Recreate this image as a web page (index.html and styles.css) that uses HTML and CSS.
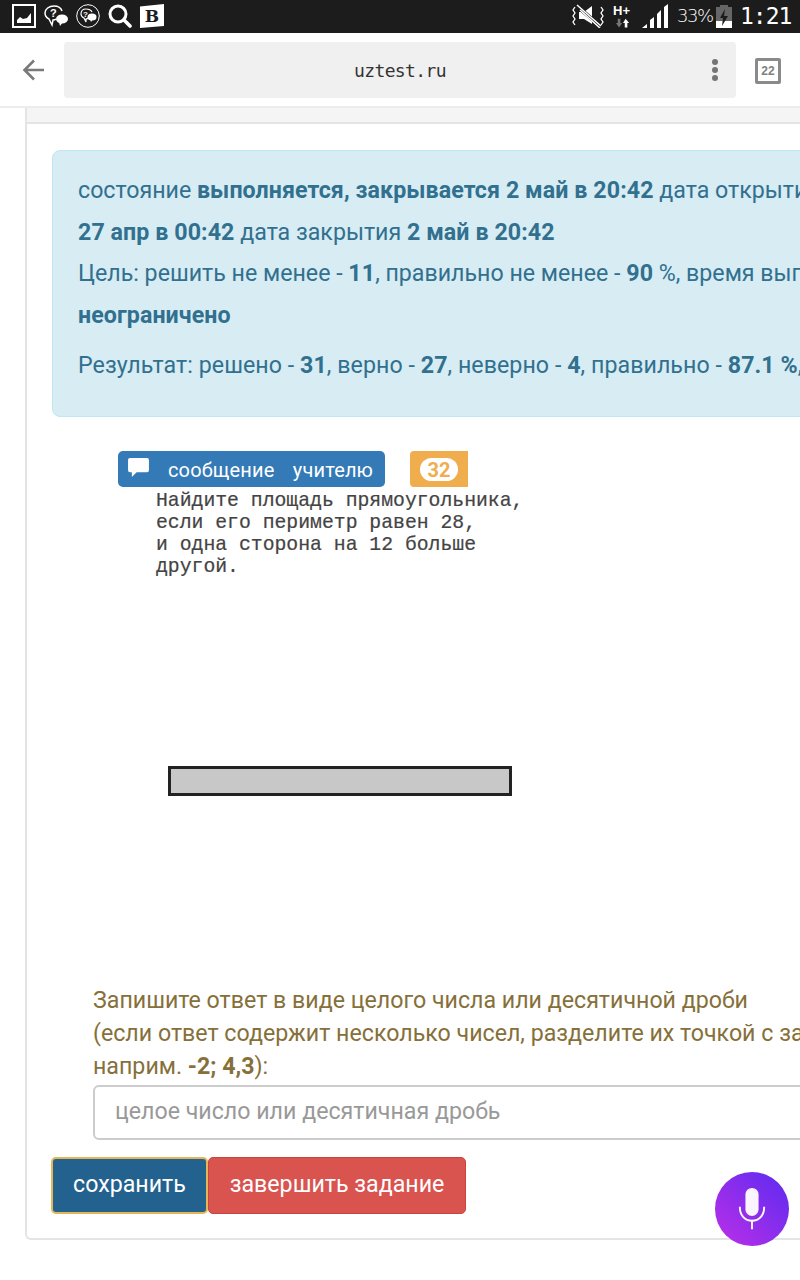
FILE: index.html
```html
<!DOCTYPE html>
<html lang="ru">
<head>
    <meta charset="UTF-8">
    <meta name="viewport" content="width=device-width, initial-scale=1.0">
    <title>uztest.ru</title>
    <link rel="stylesheet" href="styles.css">
</head>
<body>
    <div class="screen">
        <div class="status-bar">
            <div class="status-left">
                <svg class="icon" viewBox="0 0 24 24"><path fill="#fff" d="M0 0h24v24H0z"/><path fill="#1c1c1c" d="M2 2h20v20H2z"/><path fill="#fff" d="M5 19v-3l3-3 3 2 4-1 4-5v10z"/></svg>
                <svg class="icon" viewBox="0 0 24 24"><path fill="none" stroke="#fff" stroke-width="1.5" d="M10 2c-5 0-9 3-9 7 0 3 2 5 4 6l3 6 1-5c1 0 2 0 3-1"/><path fill="none" stroke="#fff" stroke-width="1.5" d="M10 2c4 0 7 2 8 5"/><text x="6" y="13" class="quest">?</text><ellipse cx="18" cy="15" rx="6" ry="4.5" fill="#fff"/><path fill="#fff" d="M15 18l1 4 3-4z"/></svg>
                <svg class="icon" viewBox="0 0 24 24"><circle cx="12" cy="12" r="11.3" fill="none" stroke="#fff"/><path fill="none" stroke="#fff" stroke-width="1.2" d="M10 5c-3 0-5 2-5 5 0 2 1 3 3 4l2 4 0-3c1 0 2-1 2-1M10 5c3 0 5 1 6 3"/><text x="7" y="13" class="quest small">?</text><ellipse cx="16" cy="13" rx="4.5" ry="3.5" fill="#fff"/><path fill="#fff" d="M14 15l1 3 2-3z"/></svg>
                <svg class="icon" viewBox="0 0 24 24"><circle cx="10" cy="10" r="8" fill="none" stroke="#fff" stroke-width="3"/><path stroke="#fff" stroke-width="3.6" stroke-linecap="round" d="M16 16l6 6"/></svg>
                <div class="b-icon">B</div>
            </div>
            <div class="status-right">
                <svg class="mute" viewBox="0 0 32 24"><path fill="#fff" d="M7 8h5l8-6v18l-8-5H7z"/><path stroke="#1c1c1c" stroke-width="4" d="M6 3l22 19"/><path stroke="#fff" stroke-width="1.5" d="M5 1l24 21M8 6l20 18"/><path fill="none" stroke="#fff" stroke-width="1.3" d="M3 3l-2 3 2 3-2 3 2 3-2 3 2 3M29 3l2 3-2 3 2 3-2 3 2 3-2 3"/></svg>
                <div class="net"><span class="net-h">H+</span><svg class="net-arrows" viewBox="0 0 16 10"><path fill="#777" d="M2 0h3v5h2L3.500 10 0 5h2z"/><path fill="#fff" d="M11 0l4 5h-2v5h-3V5H8z"/></svg></div>
                <svg class="signal" viewBox="0 0 26 24"><path fill="#fff" d="M0 24l5-4v4zM8 24v-8l4-3v11zM15 24V10l4-4v18zM22 24V3l4-3v24z"/></svg>
                <span class="battery-text">33%</span>
                <svg class="battery" viewBox="0 0 16 23"><path fill="#666" d="M4 0h8v2h4v21H0V2h4z"/><path fill="#fff" d="M0 16h16v7H0z"/><path fill="#1c1c1c" d="M9 4l-5 9h3l-1 8 6-10H8z"/></svg>
                <span class="clock">1:21</span>
            </div>
        </div>

        <div class="toolbar">
            <svg class="back" viewBox="0 0 22 22"><path fill="none" stroke="#7a7a7a" stroke-width="2.600" d="M22 11H3M12 1.500L2.500 11l9.500 9.500"/></svg>
            <div class="url-bar">
                <span class="url">uztest.ru</span>
                <div class="dots"><i></i><i></i><i></i></div>
            </div>
            <div class="tabs">22</div>
        </div>

        <div class="panel">
            <div class="panel-heading"></div>
            <div class="panel-body">
                <div class="alert">
                    <p class="alert-line">состояние <b>выполняется, закрывается 2 май в 20:42</b> дата открытия</p>
                    <p class="alert-line"><b>27 апр в 00:42</b> дата закрытия <b>2 май в 20:42</b></p>
                    <p class="alert-line">Цель: решить не менее - <b>11</b>, правильно не менее - <b>90</b> %, время выполнения</p>
                    <p class="alert-line"><b>неограничено</b></p>
                    <p class="alert-line result">Результат: решено - <b>31</b>, верно - <b>27</b>, неверно - <b>4</b>, правильно - <b>87.1 %</b>,</p>
                </div>

                <div class="task">
                    <div class="task-buttons">
                        <div class="msg-btn">
                            <svg class="msg-icon" viewBox="0 0 22 20"><path fill="#fff" d="M2 0h18a2 2 0 0 1 2 2v11a2 2 0 0 1-2 2H9l-5 5v-5H2a2 2 0 0 1-2-2V2a2 2 0 0 1 2-2z"/></svg>
                            <span class="msg-label">сообщение&nbsp;&nbsp; учителю</span>
                        </div>
                        <div class="count-btn"><span class="badge">32</span></div>
                    </div>
                    <pre class="task-text">Найдите площадь прямоугольника,
если его периметр равен 28,
и одна сторона на 12 больше
другой.</pre>
                    <div class="figure"></div>
                </div>

                <div class="answer">
                    <p class="hint">Запишите ответ в виде целого числа или десятичной дроби<br>(если ответ содержит несколько чисел, разделите их точкой с запятой,<br>наприм. <b>-2; 4,3</b>):</p>
                    <input class="answer-input" type="text" placeholder="целое число или десятичная дробь">
                </div>

                <div class="actions">
                    <button class="btn btn-save">сохранить</button>
                    <button class="btn btn-finish">завершить задание</button>
                </div>
            </div>
        </div>

        <div class="mic">
            <svg viewBox="0 0 32 44"><rect x="9" y="0" width="14" height="30" rx="7" fill="#fff" opacity=".95"/><path fill="none" stroke="#fff" stroke-width="2" d="M3 20c0 9 5 15 13 15s13-6 13-15M16 35v9"/></svg>
        </div>
    </div>
</body>
</html>
```

FILE: styles.css
```css
* {
    margin: 0;
    padding: 0;
    box-sizing: border-box;
}

body {
    background: #fff;
    font-family: Roboto, "Liberation Sans", sans-serif;
}

.screen {
    position: relative;
    width: 800px;
    height: 1280px;
    overflow: hidden;
}

/* status bar */
.status-bar {
    height: 33px;
    background: #1c1c1c;
    display: flex;
    justify-content: space-between;
    align-items: center;
    padding: 0 8px 1px 12px;
    color: #fff;
}

.status-left {
    display: flex;
    gap: 8px;
}

.icon {
    display: block;
    width: 24px;
    height: 24px;
}

.quest {
    font: bold 11px "Liberation Sans", sans-serif;
    fill: #fff;
}

.quest.small {
    font-size: 8px;
}

.b-icon {
    width: 24px;
    height: 24px;
    background: #fff;
    color: #1c1c1c;
    clip-path: polygon(0 10%, 100% 0, 100% 92%, 0 100%);
    font: bold 17px/25px "DejaVu Serif", serif;
    text-align: center;
}

.status-right {
    display: flex;
    align-items: center;
}

.mute {
    width: 32px;
    height: 24px;
}

.net {
    width: 17px;
    margin-left: 9px;
}

.net-h {
    display: block;
    font: bold 13px/13px "Liberation Sans", sans-serif;
    white-space: nowrap;
}

.net-arrows {
    display: block;
    width: 14px;
    height: 10px;
    margin: 1px 0 0 3px;
}

.signal {
    width: 26px;
    height: 24px;
    margin-left: 12px;
}

.battery-text {
    margin-left: 9px;
    font: 300 18px/24px "DejaVu Sans", sans-serif;
    letter-spacing: -1.500px;
    width: 35px;
    white-space: nowrap;
}

.battery {
    width: 16px;
    height: 23px;
    margin-left: 4px;
}

.clock {
    margin-left: 8px;
    font: 23px/28px "DejaVu Sans Mono", monospace;
    letter-spacing: -1px;
    width: 52px;
}

/* browser toolbar */
.toolbar {
    height: 75px;
    background: #fff;
    border-bottom: 2px solid #ececec;
    display: flex;
    align-items: flex-start;
}

.back {
    width: 22px;
    height: 22px;
    margin: 26px 0 0 22px;
}

.url-bar {
    position: relative;
    width: 672px;
    height: 56px;
    margin: 9px 0 0 20px;
    background: #f0f0f0;
    border-radius: 4px;
    text-align: center;
    line-height: 58px;
}

.url {
    font: 18px/58px "DejaVu Sans Mono", monospace;
    letter-spacing: -.6px;
    color: #333;
}

.dots {
    position: absolute;
    right: 18px;
    top: 17px;
    display: flex;
    flex-direction: column;
    gap: 2px;
}

.dots i {
    display: block;
    width: 6px;
    height: 6px;
    border-radius: 50%;
    background: #757575;
}

.tabs {
    width: 26px;
    height: 26px;
    margin: 25px 0 0 19px;
    border: 3px solid #8a8a8a;
    border-radius: 2px;
    color: #808080;
    font: bold 12px/20px "Liberation Sans", sans-serif;
    text-align: center;
}

/* panel */
.panel {
    width: 900px;
    margin-left: 25px;
    border: 2px solid #e4e4e4;
    border-top: 0;
    border-radius: 0 0 6px 6px;
}

.panel-heading {
    height: 16px;
    background: #f5f5f5;
    border-bottom: 2px solid #e4e4e4;
}

.panel-body {
    padding: 26px 0 24px 25px;
}

.alert {
    width: 860px;
    height: 267px;
    padding: 19px 0 0 25px;
    background: #d7ecf3;
    border: 1px solid #bce8f1;
    border-radius: 8px;
    color: #31708f;
    font-size: 23.2px;
    line-height: 41.5px;
    white-space: nowrap;
}

.alert b {
    letter-spacing: .08px;
}

.result {
    margin-top: 9px;
    letter-spacing: .05px;
}

.task {
    margin: 34px 0 0 66px;
}

.task-buttons {
    display: flex;
    gap: 25px;
    height: 36px;
}

.msg-btn {
    width: 267px;
    height: 36px;
    padding-left: 10px;
    background: #337ab7;
    border-radius: 5px;
    color: #fff;
    font-size: 20px;
    line-height: 38px;
    display: flex;
    white-space: nowrap;
}

.msg-label {
    word-spacing: 1px;
    letter-spacing: .15px;
}

.msg-icon {
    width: 21px;
    height: 19px;
    margin: 7px 19px 0 0;
}

.count-btn {
    width: 58px;
    height: 36px;
    padding: 7px 0 0 10px;
    background: #f0ad4e;
    border-radius: 4px 0 0 4px;
}

.badge {
    display: block;
    width: 38px;
    height: 23px;
    background: #fff;
    border-radius: 12px;
    color: #f0ad4e;
    font-size: 20px;
    font-weight: 700;
    line-height: 24px;
    text-align: center;
}

.task-text {
    margin: 3px 0 0 38px;
    font: 19.75px/22px "Liberation Mono", monospace;
    color: #444;
    -webkit-text-stroke: .2px #444;
}

.figure {
    width: 344px;
    height: 30px;
    margin: 188px 0 0 50px;
    background: #c8c8c8;
    border: 3px solid #222;
}

.answer {
    margin: 188px 0 0 41px;
}

.hint {
    color: #86703a;
    font-size: 23.2px;
    line-height: 33px;
    white-space: nowrap;
}

.answer-input {
    display: block;
    width: 760px;
    height: 55px;
    margin-top: 2px;
    padding: 0 20px 4px;
    border: 2px solid #ccc;
    border-radius: 6px;
    font: 23.200px Roboto, sans-serif;
    color: #555;
}

.answer-input::placeholder {
    color: #999;
    opacity: 1;
}

.actions {
    display: flex;
    margin: 17px 0 0 -1px;
}

.btn {
    height: 57px;
    padding-bottom: 4px;
    border-radius: 5px;
    color: #fff;
    font: 23.2px Roboto, sans-serif;
}

.btn-save {
    width: 157px;
    background: #23628f;
    border: 2px solid #e4b658;
}

.btn-finish {
    width: 258px;
    background: #d9534f;
    border: 1px solid #c9443f;
}

/* voice button floats over the page */
.mic {
    position: absolute;
    left: 715px;
    top: 1172px;
    width: 74px;
    height: 74px;
    border-radius: 50%;
    background: linear-gradient(45deg, #bd2fe8, #5b2bf0);
    display: flex;
    justify-content: center;
    padding-top: 15px;
}

.mic svg {
    width: 30px;
    height: 43px;
}
```
